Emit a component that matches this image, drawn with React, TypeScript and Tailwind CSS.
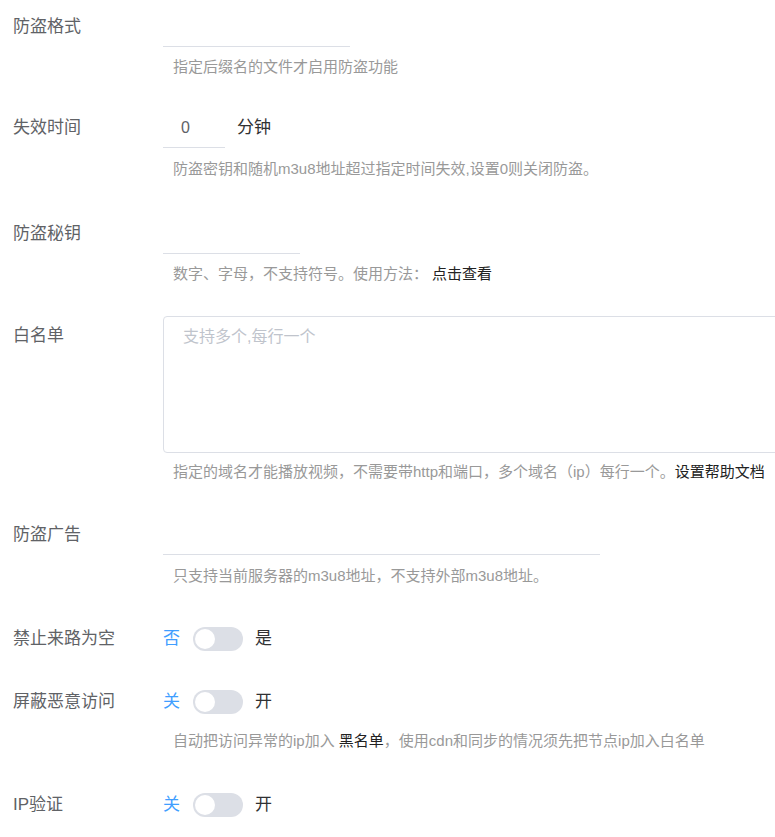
import { useState } from 'react';

function Label({ children }: { children: React.ReactNode }) {
  return <div className="w-[163px] shrink-0 pl-[13px] text-[17px] leading-[40px] text-[#606266]">{children}</div>;
}

function Help({ children, mt = 'mt-[10px]' }: { children: React.ReactNode; mt?: string }) {
  return <div className={`${mt} ml-[173px] whitespace-nowrap text-[15px] leading-[20px] text-[#999]`}>{children}</div>;
}

function LineInput({ w, value }: { w: string; value?: string }) {
  return (
    <div className={`${w} h-[40px] border-b border-[#dcdfe6] text-[16px] leading-[40px] text-[#606266] pl-[18px]`}>
      {value}
    </div>
  );
}

function Toggle({ off, on }: { off: string; on: string }) {
  const [checked, setChecked] = useState(false);
  return (
    <div className="flex h-[40px] items-center text-[17px]">
      <span className={checked ? 'text-[#303133]' : 'text-[#409eff]'}>{off}</span>
      <button
        onClick={() => setChecked(!checked)}
        className={`ml-[13px] mr-[12px] flex h-[24px] w-[50px] items-center rounded-full px-[2px] ${checked ? 'justify-end bg-[#409eff]' : 'bg-[#dcdfe6]'}`}
      >
        <span className="h-[20px] w-[20px] rounded-full bg-white" />
      </button>
      <span className={checked ? 'text-[#409eff]' : 'text-[#303133]'}>{on}</span>
    </div>
  );
}

export default function App() {
  return (
    <div
      className="h-[837px] w-[775px] overflow-hidden bg-white pt-[7px]"
      style={{ fontFamily: '"Liberation Sans", "Noto Sans CJK SC", sans-serif' }}
    >
      {/* 防盗格式 */}
      <div className="flex">
        <Label>防盗格式</Label>
        <LineInput w="w-[187px]" />
      </div>
      <Help mt="mt-[10px]">指定后缀名的文件才启用防盗功能</Help>

      {/* 失效时间 */}
      <div className="mt-[31px] flex">
        <Label>失效时间</Label>
        <LineInput w="w-[62px]" value="0" />
        <span className="ml-[12px] text-[17px] leading-[40px] text-[#303133]">分钟</span>
      </div>
      <Help mt="mt-[11px]">防盗密钥和随机m3u8地址超过指定时间失效,设置0则关闭防盗。</Help>

      {/* 防盗秘钥 */}
      <div className="mt-[35px] flex">
        <Label>防盗秘钥</Label>
        <LineInput w="w-[137px]" />
      </div>
      <Help>
        数字、字母，不支持符号。使用方法：<span className="ml-[4px] text-[#222]">点击查看</span>
      </Help>

      {/* 白名单 */}
      <div className="mt-[32px] flex">
        <Label>白名单</Label>
        <textarea
          placeholder="支持多个,每行一个"
          className="h-[137px] w-[640px] shrink-0 resize-none rounded-[4px] border border-[#dcdfe6] px-[19px] py-[8px] text-[16px] leading-[24px] text-[#606266] outline-none placeholder:text-[#c0c4cc]"
        />
      </div>
      <Help mt="mt-[9px]">
        指定的域名才能播放视频，不需要带http和端口，多个域名（ip）每行一个。<span className="text-[#222]">设置帮助文档</span>
      </Help>

      {/* 防盗广告 */}
      <div className="mt-[33px] flex">
        <Label>防盗广告</Label>
        <LineInput w="w-[437px]" />
      </div>
      <Help mt="mt-[11px]">只支持当前服务器的m3u8地址，不支持外部m3u8地址。</Help>

      {/* 禁止来路为空 */}
      <div className="mt-[33px] flex">
        <Label>禁止来路为空</Label>
        <Toggle off="否" on="是" />
      </div>

      {/* 屏蔽恶意访问 */}
      <div className="mt-[23px] flex">
        <Label>屏蔽恶意访问</Label>
        <Toggle off="关" on="开" />
      </div>
      <Help mt="mt-[9px]">
        自动把访问异常的ip加入 <span className="text-[#222]">黑名单</span>，使用cdn和同步的情况须先把节点ip加入白名单
      </Help>

      {/* IP验证 */}
      <div className="mt-[34px] flex">
        <Label>IP验证</Label>
        <Toggle off="关" on="开" />
      </div>
    </div>
  );
}
